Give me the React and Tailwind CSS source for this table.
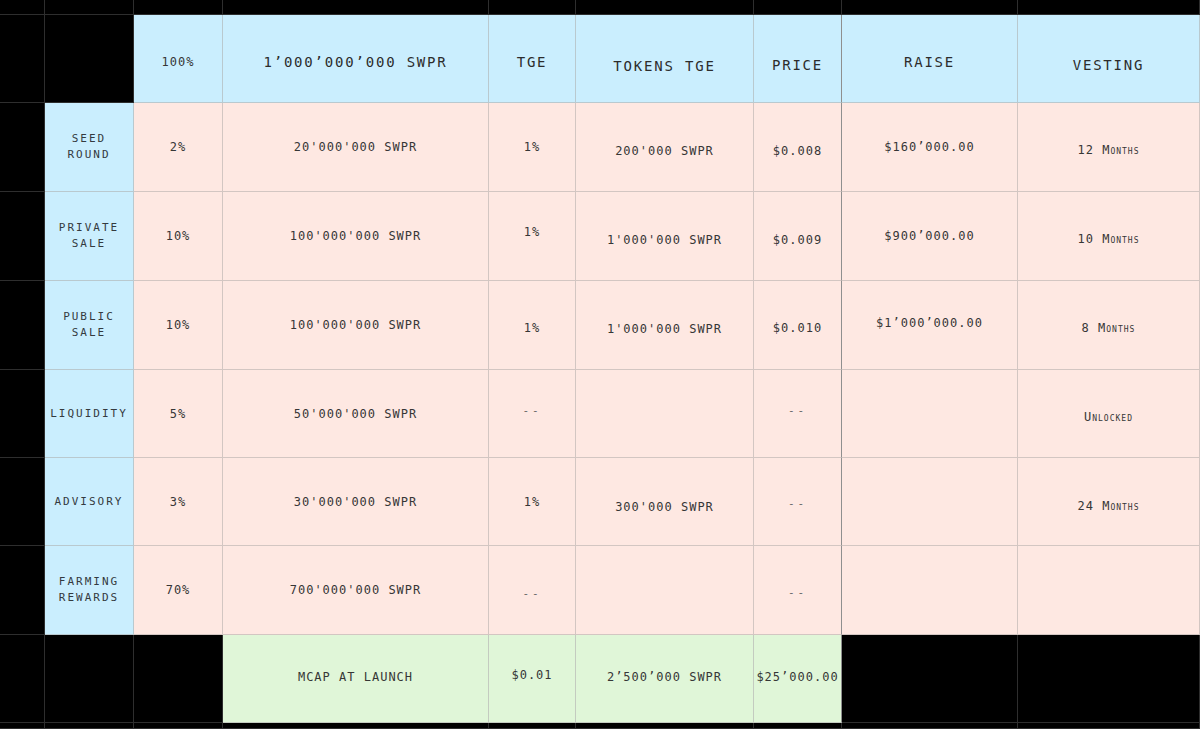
import React from 'react';

const BG = {
  black: 'bg-black border-[#2e2e2e]',
  blue: 'bg-[#caeefe] border-[#b9c9cf]',
  pink: 'bg-[#fee8e2] border-[#d3c6c2]',
  green: 'bg-[#e0f6d8] border-[#c4cbc0]',
};

const SHIFT = {
  '-4': 'pb-[8px]',
  '-2': 'pb-[4px]',
  '0': '',
  '2': 'pt-[4px]',
  '3': 'pt-[6px]',
  '4': 'pt-[8px]',
  '5': 'pt-[10px]',
  '7': 'pt-[14px]',
  '8': 'pt-[16px]',
};

const KIND = {
  body: 'text-[12px] tracking-[1px] text-[#363636]',
  big: 'text-[14px] tracking-[1.8px] text-[#2c2c2c]',
  label: 'text-[11px] leading-[16px] tracking-[2px] text-[#343a3f]',
  caps: 'text-[12px] tracking-[1px] text-[#363636] [font-variant-caps:small-caps]',
  dash: 'text-[11px] tracking-[3px] text-[#666]',
};

function Cell({ bg = 'black', kind = 'body', dy = 0, dark, children }) {
  return (
    <div
      className={`flex items-center justify-center border-r border-b text-center ${BG[bg]} ${SHIFT[String(dy)]} ${KIND[kind]} ${dark ? 'border-r-[#8f8f8f]' : ''}`}
    >
      {children ? <span>{children}</span> : null}
    </div>
  );
}

const rows = [
  ['SEED', 'ROUND', '2%', "20'000'000 SWPR", ['1%', 0], ["200'000 SWPR", 4], ['$0.008', 4], ['$160’000.00', 0], ['12 Months', 3]],
  ['PRIVATE', 'SALE', '10%', "100'000'000 SWPR", ['1%', -4], ["1'000'000 SWPR", 4], ['$0.009', 4], ['$900’000.00', 0], ['10 Months', 3]],
  ['PUBLIC', 'SALE', '10%', "100'000'000 SWPR", ['1%', 3], ["1'000'000 SWPR", 4], ['$0.010', 3], ['$1’000’000.00', -2], ['8 Months', 3]],
  ['LIQUIDITY', null, '5%', "50'000'000 SWPR", ['--', -2], ['', 0], ['--', -2], ['', 0], ['Unlocked', 3]],
  ['ADVISORY', null, '3%', "30'000'000 SWPR", ['1%', 0], ["300'000 SWPR", 5], ['--', 3], ['', 0], ['24 Months', 4]],
  ['FARMING', 'REWARDS', '70%', "700'000'000 SWPR", ['--', 4], ['', 0], ['--', 3], ['', 0], ['', 0]],
];

export default function App() {
  return (
    <div className="h-[729px] w-[1200px] overflow-hidden bg-black font-['DejaVu_Sans_Mono','Liberation_Mono',monospace]">
      <div className="grid grid-cols-[45px_89px_89px_266px_87px_178px_88px_176px_182px] grid-rows-[15px_88px_89px_89px_89px_88px_88px_89px_88px_6px]">
        {/* top strip */}
        {Array.from({ length: 9 }).map((_, i) => (
          <Cell key={`top-${i}`} />
        ))}

        {/* header */}
        <Cell />
        <Cell />
        <Cell bg="blue" dy={3}>100%</Cell>
        <Cell bg="blue" kind="big" dy={4}>1’000’000’000 SWPR</Cell>
        <Cell bg="blue" kind="big" dy={4}>TGE</Cell>
        <Cell bg="blue" kind="big" dy={8}>TOKENS TGE</Cell>
        <Cell bg="blue" kind="big" dy={7} dark>PRICE</Cell>
        <Cell bg="blue" kind="big" dy={4}>RAISE</Cell>
        <Cell bg="blue" kind="big" dy={7}>VESTING</Cell>

        {rows.map((r) => (
          <React.Fragment key={r[0]}>
            <Cell />
            <Cell bg="blue" kind="label">
              {r[0]}
              {r[1] ? <br /> : null}
              {r[1]}
            </Cell>
            <Cell bg="pink">{r[2]}</Cell>
            <Cell bg="pink">{r[3]}</Cell>
            <Cell bg="pink" kind={r[4][0] === '--' ? 'dash' : 'body'} dy={r[4][1]}>{r[4][0]}</Cell>
            <Cell bg="pink" dy={r[5][1]}>{r[5][0]}</Cell>
            <Cell bg="pink" kind={r[6][0] === '--' ? 'dash' : 'body'} dy={r[6][1]} dark>{r[6][0]}</Cell>
            <Cell bg="pink" dy={r[7][1]}>{r[7][0]}</Cell>
            <Cell bg="pink" kind="caps" dy={r[8][1]}>{r[8][0]}</Cell>
          </React.Fragment>
        ))}

        {/* launch row */}
        <Cell />
        <Cell />
        <Cell />
        <Cell bg="green" dy={-2}>MCAP AT LAUNCH</Cell>
        <Cell bg="green" dy={-4}>$0.01</Cell>
        <Cell bg="green" dy={-2}>2’500’000 SWPR</Cell>
        <Cell bg="green" dy={-2} dark>$25’000.00</Cell>
        <Cell />
        <Cell />

        {/* bottom strip */}
        {Array.from({ length: 9 }).map((_, i) => (
          <Cell key={`bot-${i}`} />
        ))}
      </div>
    </div>
  );
}
